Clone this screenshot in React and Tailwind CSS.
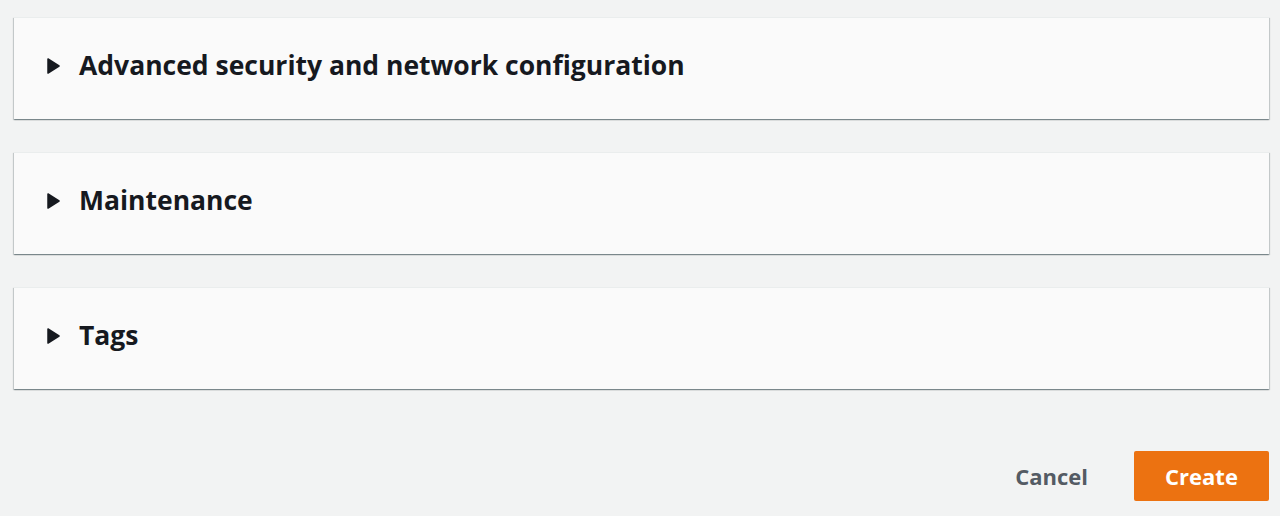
import React from "react";

const sections = [
  "Advanced security and network configuration",
  "Maintenance",
  "Tags",
];

const Caret = () => (
  <svg width="13" height="16" viewBox="0 0 13 16" className="shrink-0">
    <path
      d="M1 1 L12 8 L1 15 Z"
      fill="#16191f"
      stroke="#16191f"
      strokeWidth="1.5"
      strokeLinejoin="round"
    />
  </svg>
);

const Section = ({ title }) => (
  <div className="bg-[#fafafa] border-t border-[#eaeded] shadow-[0_1px_1px_0_rgba(0,28,36,0.3),1px_1px_1px_0_rgba(0,28,36,0.15),-1px_1px_1px_0_rgba(0,28,36,0.15)] h-[102px] flex items-center pl-[33px] pb-[6px]">
    <button className="flex items-center gap-[19px] text-[#16191f] text-[26.5px] font-bold leading-none">
      <Caret />
      <span>{title}</span>
    </button>
  </div>
);

export default function App() {
  return (
    <div
      className="min-h-[516px] bg-[#f2f3f3] pl-[14px] pr-[11px] pt-[17px]"
      style={{ fontFamily: '"Open Sans", "Noto Sans", sans-serif' }}
    >
      <div className="flex flex-col gap-[33px]">
        {sections.map((s) => (
          <Section key={s} title={s} />
        ))}
      </div>
      <div className="flex justify-end items-center gap-[46px] mt-[62px]">
        <button className="text-[#545b64] text-[22px] font-bold">Cancel</button>
        <button className="bg-[#ec7211] text-white text-[22px] font-bold rounded-[2px] w-[135px] h-[50px]">
          Create
        </button>
      </div>
    </div>
  );
}
